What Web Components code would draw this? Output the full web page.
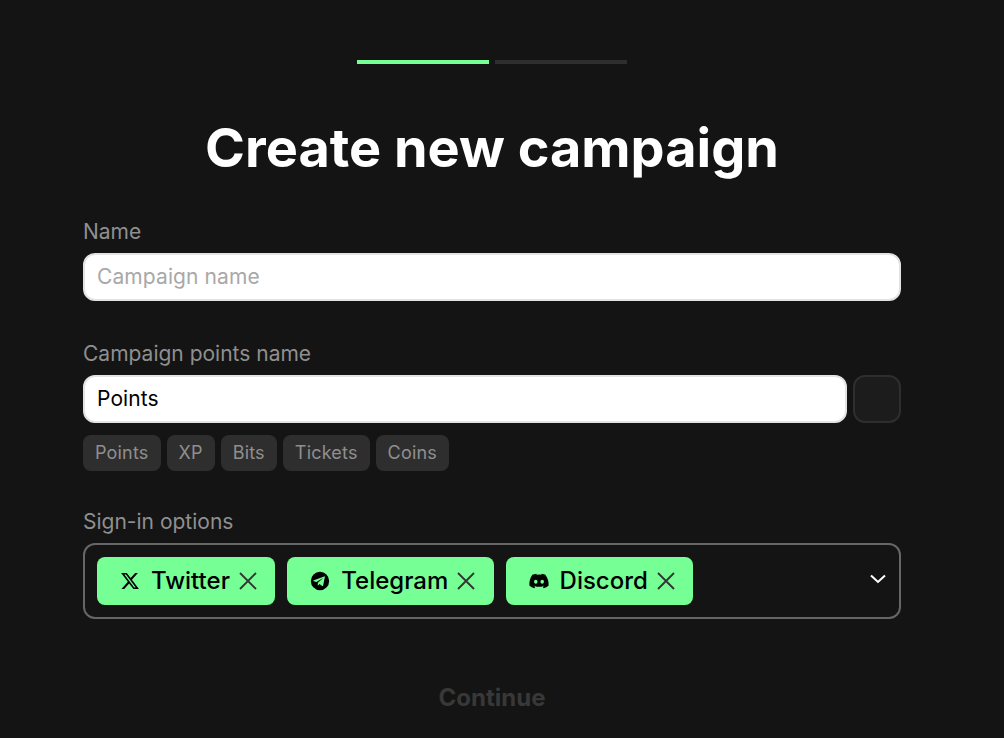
<!DOCTYPE html>
<html lang="en">
<head>
<meta charset="utf-8">
<title>Create new campaign</title>
<style>
  html, body { margin: 0; height: 100%; background: #141414; overflow: hidden; }
  body { font-family: Inter, "Liberation Sans", sans-serif; }
</style>
</head>
<body>
<campaign-form>
  <step-bar slot="steps"></step-bar>
  <form-field label="Name">
    <text-box placeholder="Campaign name"></text-box>
  </form-field>
  <form-field label="Campaign points name" style="margin-top:36px">
    <div style="display:flex;gap:6px">
      <text-box value="Points" style="flex:1"></text-box>
      <color-swatch></color-swatch>
    </div>
    <div style="display:flex;gap:6px;margin-top:12px">
      <suggest-chip>Points</suggest-chip>
      <suggest-chip>XP</suggest-chip>
      <suggest-chip>Bits</suggest-chip>
      <suggest-chip>Tickets</suggest-chip>
      <suggest-chip>Coins</suggest-chip>
    </div>
  </form-field>
  <form-field label="Sign-in options" style="margin-top:34px">
    <multi-select>
      <option-pill icon="x">Twitter</option-pill>
      <option-pill icon="telegram">Telegram</option-pill>
      <option-pill icon="discord">Discord</option-pill>
    </multi-select>
  </form-field>
</campaign-form>

<script>
const icons = {
  x: '<path transform="translate(12 12) scale(.9) translate(-12 -12)" fill="currentColor" d="M18.244 2.250h3.308l-7.227 8.260 8.502 11.240H16.170l-5.214-6.817L4.990 21.750H1.680l7.730-8.835L1.254 2.250H8.080l4.713 6.231zm-1.161 17.520h1.833L7.084 4.126H5.117z"/>',
  telegram: '<path fill="currentColor" fill-rule="evenodd" d="M12 2a10 10 0 1 0 0 20 10 10 0 0 0 0-20zm5.300 5.600-1.900 9.300c-.1.600-.5.800-1 .5l-2.900-2.200-1.400 1.400c-.2.200-.3.300-.6.300l.2-3 5.400-4.900c.2-.2 0-.3-.3-.1l-6.700 4.200-2.900-.9c-.6-.2-.6-.6.100-.9l11.200-4.300c.5-.2 1 .1.800.6z"/>',
  discord: '<path fill="currentColor" d="M19.300 5.300A17 17 0 0 0 15 4l-.5 1.100a16 16 0 0 0-5 0L9 4a17 17 0 0 0-4.300 1.300C2 9.400 1.200 13.400 1.600 17.300A17 17 0 0 0 6.900 20l1.100-1.800-1.700-.8.400-.3a12 12 0 0 0 10.600 0l.4.300-1.700.8 1.100 1.800a17 17 0 0 0 5.300-2.700c.5-4.500-.8-8.500-3.600-12zM8.500 14.900c-1 0-1.900-1-1.900-2.200s.8-2.200 1.900-2.200 1.900 1 1.900 2.200-.8 2.200-1.900 2.200zm7 0c-1 0-1.900-1-1.900-2.200s.8-2.200 1.900-2.200 1.900 1 1.900 2.200-.8 2.200-1.900 2.200z"/>'
};

class CampaignForm extends HTMLElement {
  constructor() {
    super();
    this.attachShadow({ mode: 'open' });
    this.shadowRoot.innerHTML = `
      <style>
        :host { display: block; width: 984px; box-sizing: border-box; padding: 60px 83px 0; }
        .steps { display: flex; justify-content: center; }
        h1 {
          margin: 50px 0 33px;
          height: 68px;
          font: 700 54px/68px Inter, "Liberation Sans", sans-serif;
          color: #fff;
          text-align: center;
        }
        .continue {
          margin-top: 63px;
          font: 700 24px/32px Inter, "Liberation Sans", sans-serif;
          color: #383838;
          text-align: center;
        }
      </style>
      <div class="steps"><slot name="steps"></slot></div>
      <h1>Create new campaign</h1>
      <slot></slot>
      <div class="continue">Continue</div>
    `;
  }
}

class StepBar extends HTMLElement {
  constructor() {
    super();
    this.attachShadow({ mode: 'open' });
    this.shadowRoot.innerHTML = `
      <style>
        :host { display: flex; gap: 6px; }
        i { display: block; width: 132px; height: 4px; background: #2e2e2e; }
        i.on { background: #75ff95; }
      </style>
      <i class="on"></i><i></i>
    `;
  }
}

class FormField extends HTMLElement {
  constructor() {
    super();
    this.attachShadow({ mode: 'open' });
    this.shadowRoot.innerHTML = `
      <style>
        :host { display: block; }
        label {
          display: block;
          height: 32px;
          margin-bottom: 6px;
          font: 400 21px/33px Inter, "Liberation Sans", sans-serif;
          color: #8f8f8f;
        }
      </style>
      <label>${this.getAttribute('label')}</label>
      <slot></slot>
    `;
  }
}

class TextBox extends HTMLElement {
  constructor() {
    super();
    this.attachShadow({ mode: 'open' });
    const value = this.getAttribute('value');
    this.shadowRoot.innerHTML = `
      <style>
        :host {
          display: block;
          box-sizing: border-box;
          height: 48px;
          padding: 0 12px;
          background: #fff;
          border: 2px solid #e3e3e3;
          border-radius: 12px;
          font: 400 21px/44px Inter, "Liberation Sans", sans-serif;
          letter-spacing: .1px;
          color: #000;
        }
        .ph { color: #a8a8a8; }
      </style>
      ${value ? `<span>${value}</span>` : `<span class="ph">${this.getAttribute('placeholder')}</span>`}
    `;
  }
}

class ColorSwatch extends HTMLElement {
  constructor() {
    super();
    this.attachShadow({ mode: 'open' });
    this.shadowRoot.innerHTML = `
      <style>
        :host {
          display: block;
          box-sizing: border-box;
          width: 48px;
          height: 48px;
          background: #1c1c1c;
          border: 2px solid #2e2e2e;
          border-radius: 12px;
        }
      </style>
    `;
  }
}

class SuggestChip extends HTMLElement {
  constructor() {
    super();
    this.attachShadow({ mode: 'open' });
    this.shadowRoot.innerHTML = `
      <style>
        :host {
          display: block;
          height: 36px;
          padding: 0 12px;
          background: #2e2e2e;
          border-radius: 8px;
          font: 400 18px/36px Inter, "Liberation Sans", sans-serif;
          letter-spacing: .19px;
          color: #8f8f8f;
        }
      </style>
      <slot></slot>
    `;
  }
}

class MultiSelect extends HTMLElement {
  constructor() {
    super();
    this.attachShadow({ mode: 'open' });
    this.shadowRoot.innerHTML = `
      <style>
        :host {
          display: flex;
          align-items: center;
          box-sizing: border-box;
          height: 76px;
          padding: 0 12px;
          border: 2px solid #666;
          border-radius: 12px;
        }
        .pills { display: flex; gap: 12px; flex: 1; }
        svg { display: block; width: 20px; height: 20px; margin-right: -1px; color: #fff; }
      </style>
      <div class="pills"><slot></slot></div>
      <svg viewBox="0 0 20 20" fill="none" stroke="currentColor" stroke-width="2">
        <path d="M3 4.500 10 11l7-6.500"/>
      </svg>
    `;
  }
}

class OptionPill extends HTMLElement {
  constructor() {
    super();
    this.attachShadow({ mode: 'open' });
    this.shadowRoot.innerHTML = `
      <style>
        :host {
          display: flex;
          align-items: center;
          height: 48px;
          padding: 0 18.300px 0 22px;
          background: #75ff95;
          border-radius: 8px;
          font: 500 24px/48px Inter, "Liberation Sans", sans-serif;
          color: #000;
        }
        .icon { width: 22px; height: 22px; margin-right: 10px; }
        .close { width: 18px; height: 18px; margin-left: 9px; color: #333; }
      </style>
      <svg class="icon" viewBox="0 0 24 24">${icons[this.getAttribute('icon')]}</svg>
      <slot></slot>
      <svg class="close" viewBox="0 0 18 18" fill="none" stroke="currentColor" stroke-width="1.800">
        <path d="M1 1l16 16M17 1 1 17"/>
      </svg>
    `;
  }
}

customElements.define('campaign-form', CampaignForm);
customElements.define('step-bar', StepBar);
customElements.define('form-field', FormField);
customElements.define('text-box', TextBox);
customElements.define('color-swatch', ColorSwatch);
customElements.define('suggest-chip', SuggestChip);
customElements.define('multi-select', MultiSelect);
customElements.define('option-pill', OptionPill);
</script>
</body>
</html>
